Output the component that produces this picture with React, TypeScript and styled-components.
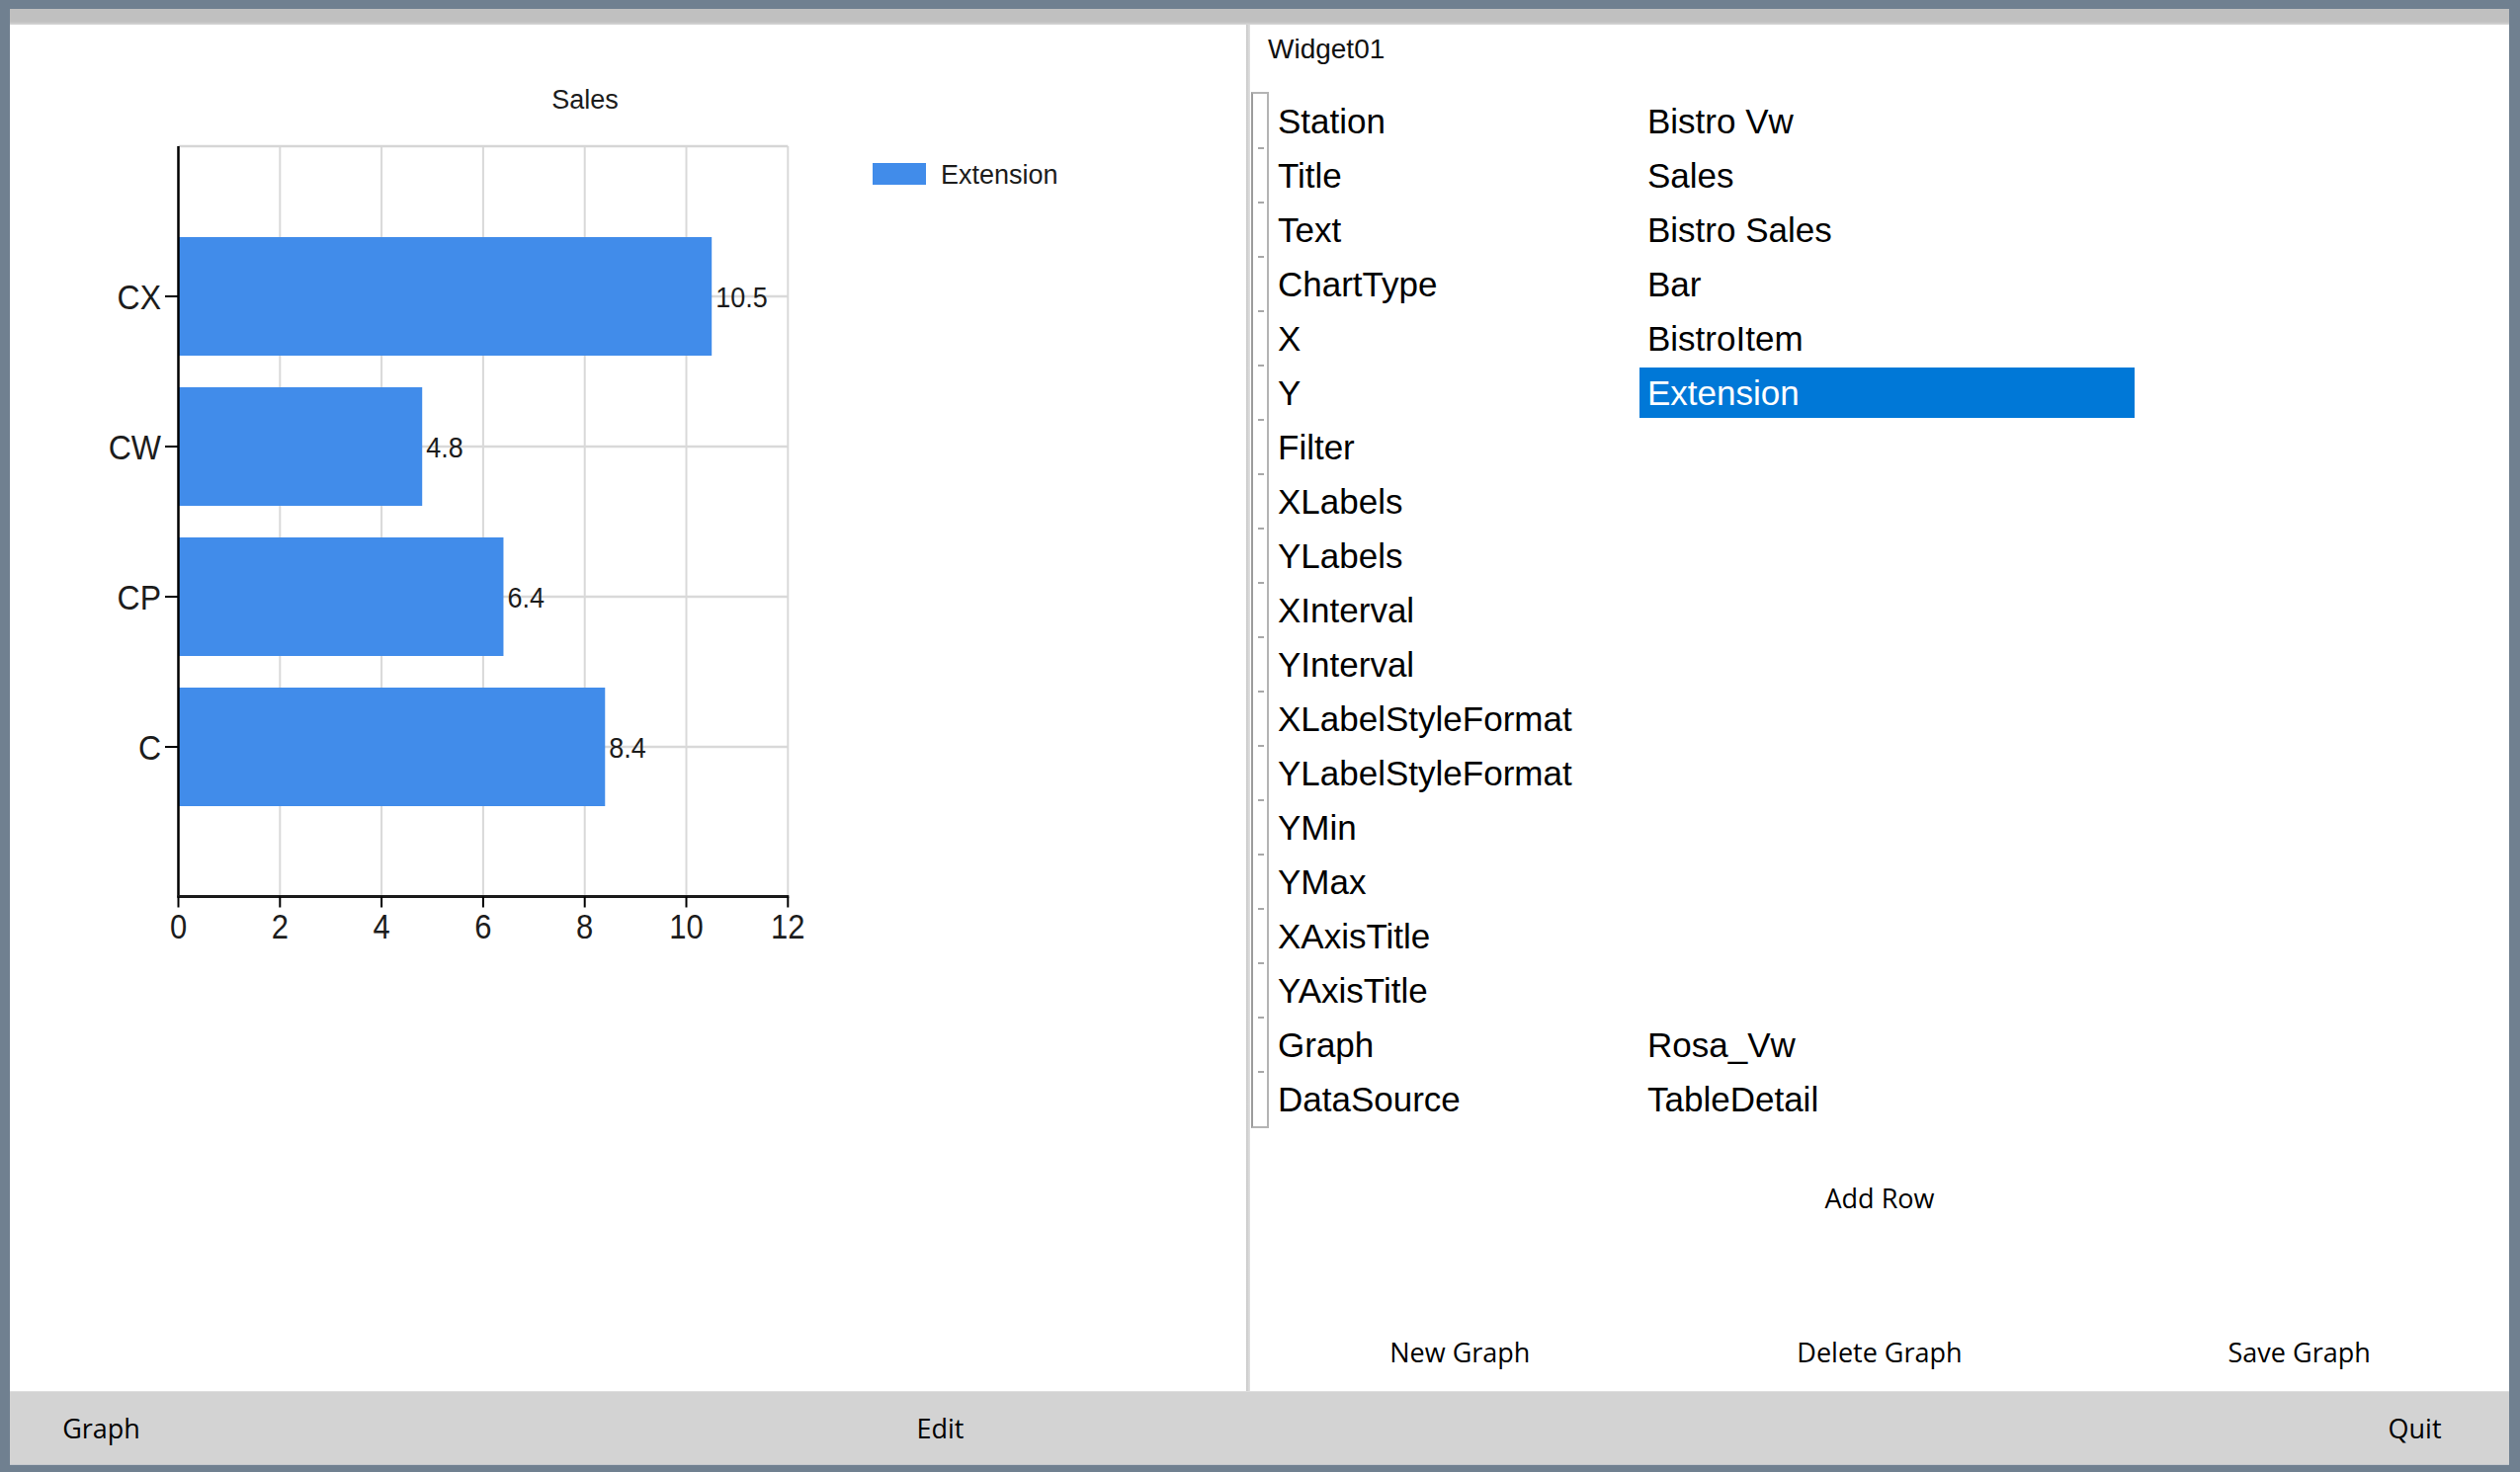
import React from "react";
import styled, { createGlobalStyle } from "styled-components";

const GlobalStyle = createGlobalStyle`
  html, body { margin: 0; padding: 0; }
  body { background: #708090; font-family: "Liberation Sans", Arial, sans-serif; }
  * { box-sizing: border-box; }
`;

const Window = styled.div`
  width: 2550px;
  height: 1490px;
  background: #708090;
  padding: 9px 11px 7px 10px;
  display: flex;
  flex-direction: column;
`;

const TopStrip = styled.div`
  height: 16px;
  flex: none;
  background: linear-gradient(#c0c0c0 0, #c0c0c0 13px, #d8d8d8 16px);
`;

const Main = styled.div`
  flex: 1;
  display: flex;
  min-height: 0;
`;

const ChartPanel = styled.div`
  width: 1251px;
  flex: none;
  background: #ffffff;
`;

const Divider = styled.div`
  width: 4px;
  flex: none;
  background: linear-gradient(90deg, #c8c8c8, #e2e2e2);
`;

const EditorPanel = styled.div`
  flex: 1;
  background: #ffffff;
  display: flex;
  flex-direction: column;
`;

const WidgetName = styled.div`
  height: 68px;
  padding: 8px 0 0 18px;
  font-family: "Liberation Sans", Arial, sans-serif;
  font-size: 28px;
  line-height: 34px;
  color: #111;
`;

const GridFrame = styled.div`
  display: flex;
  margin-left: 1px;
`;

const HeaderColumn = styled.div`
  width: 18px;
  border: 2px solid #b4b4b4;
  border-left-color: #9c9c9c;
  display: flex;
  flex-direction: column;
`;

const HeaderCell = styled.div<{ $last: boolean }>`
  height: 55px;
  position: relative;
  &::after {
    content: "";
    display: ${(p) => (p.$last ? "none" : "block")};
    position: absolute;
    left: 5px;
    bottom: -1px;
    width: 6px;
    height: 2px;
    background: #a8a8a8;
  }
`;

const Rows = styled.div`
  display: flex;
  flex-direction: column;
  padding-top: 2px;
`;

const Row = styled.div`
  display: grid;
  grid-template-columns: 375px 501px;
  height: 55px;
`;

const Cell = styled.div<{ $selected?: boolean; $value?: boolean }>`
  font-family: "Liberation Sans", Arial, sans-serif;
  font-size: 35px;
  line-height: 55px;
  white-space: nowrap;
  padding-left: ${(p) => (p.$value ? "8px" : "9px")};
  color: ${(p) => (p.$selected ? "#ffffff" : "#000000")};
  background: ${(p) => (p.$selected ? "#0078d7" : "transparent")};
  box-shadow: ${(p) =>
    p.$selected ? "inset 0 2px 0 #ffffff, inset 0 -2px 0 #ffffff" : "none"};
`;

const FlatButton = styled.div`
  font-family: "Open Sans", "Noto Sans", sans-serif;
  font-size: 27px;
  line-height: 46px;
  height: 46px;
  text-align: center;
  color: #000;
  white-space: nowrap;
`;

const AddRowArea = styled.div`
  margin-top: 48px;
`;

const ActionRow = styled.div`
  margin-top: 110px;
  display: grid;
  grid-template-columns: 1fr 1fr 1fr;
`;

const BottomBar = styled.div`
  height: 75px;
  flex: none;
  background: #d3d3d3;
  border-top: 1px solid #dedede;
  border-bottom: 1px solid #c4c8cc;
  display: grid;
  grid-template-columns: 185px 664px 185px 1fr 185px;
  padding-right: 3px;
`;

const BarItem = styled.div`
  font-family: "Open Sans", "Noto Sans", sans-serif;
  font-size: 27px;
  line-height: 73px;
  text-align: center;
  color: #000;
`;

const X0 = 180.5;
const PX = 51.4;
const TOP = 148;
const BOTTOM = 907.5;
const RIGHT = X0 + 12 * PX;

const data = [
  { label: "CX", v: 10.5, y: 300 },
  { label: "CW", v: 4.8, y: 452 },
  { label: "CP", v: 6.4, y: 604 },
  { label: "C", v: 8.4, y: 756 },
];

const TXT = "#1c1c1c";

function SText(props: {
  x: number;
  y: number;
  size: number;
  anchor: "start" | "middle" | "end";
  sy?: number;
  children: React.ReactNode;
}) {
  const sy = props.sy ?? 1;
  return (
    <text
      transform={`translate(${props.x} ${props.y}) scale(1 ${sy})`}
      x={0}
      y={0}
      fontSize={props.size}
      textAnchor={props.anchor}
      dominantBaseline="central"
      fill={TXT}
      fontFamily='"Liberation Sans", Arial, sans-serif'
    >
      {props.children}
    </text>
  );
}

function SalesChart() {
  const ticks = [0, 2, 4, 6, 8, 10, 12];
  return (
    <svg width={1251} height={1383} viewBox="10 25 1251 1383">
      <SText x={592} y={101} size={27} anchor="middle">
        Sales
      </SText>
      {ticks.slice(1).map((t) => (
        <line
          key={`g${t}`}
          x1={X0 + t * PX}
          x2={X0 + t * PX}
          y1={TOP}
          y2={BOTTOM}
          stroke="#d9d9d9"
          strokeWidth={2}
        />
      ))}
      <line x1={X0} x2={RIGHT} y1={TOP} y2={TOP} stroke="#d6d6d6" strokeWidth={2.5} />
      {data.map((d) => (
        <line
          key={`h${d.label}`}
          x1={X0}
          x2={RIGHT}
          y1={d.y}
          y2={d.y}
          stroke="#d9d9d9"
          strokeWidth={2.5}
        />
      ))}
      {data.map((d) => (
        <rect
          key={`b${d.label}`}
          x={X0}
          y={d.y - 60}
          width={d.v * PX}
          height={120}
          fill="#418cea"
        />
      ))}
      <line x1={X0} x2={X0} y1={TOP} y2={BOTTOM + 1} stroke="#000" strokeWidth={2.5} />
      <line x1={X0 - 1} x2={RIGHT + 1} y1={BOTTOM} y2={BOTTOM} stroke="#1a1a1a" strokeWidth={3} />
      {ticks.map((t) => (
        <line
          key={`t${t}`}
          x1={X0 + t * PX}
          x2={X0 + t * PX}
          y1={BOTTOM}
          y2={BOTTOM + 11}
          stroke="#000"
          strokeWidth={2}
        />
      ))}
      {data.map((d) => (
        <line key={`yt${d.label}`} x1={167} x2={X0} y1={d.y} y2={d.y} stroke="#000" strokeWidth={2} />
      ))}
      {data.map((d) => (
        <SText key={`l${d.label}`} x={163} y={d.y} size={32} anchor="end" sy={1.12}>
          {d.label}
        </SText>
      ))}
      {data.map((d) => (
        <SText key={`v${d.label}`} x={X0 + d.v * PX + 4} y={d.y} size={27} anchor="start" sy={1.12}>
          {d.v.toFixed(1)}
        </SText>
      ))}
      {ticks.map((t) => (
        <SText key={`n${t}`} x={X0 + t * PX} y={938} size={31} anchor="middle" sy={1.12}>
          {t}
        </SText>
      ))}
      <rect x={883} y={165} width={54} height={22} fill="#418cea" />
      <SText x={952} y={177} size={27} anchor="start">
        Extension
      </SText>
    </svg>
  );
}

const properties: { name: string; value: string }[] = [
  { name: "Station", value: "Bistro Vw" },
  { name: "Title", value: "Sales" },
  { name: "Text", value: "Bistro Sales" },
  { name: "ChartType", value: "Bar" },
  { name: "X", value: "BistroItem" },
  { name: "Y", value: "Extension" },
  { name: "Filter", value: "" },
  { name: "XLabels", value: "" },
  { name: "YLabels", value: "" },
  { name: "XInterval", value: "" },
  { name: "YInterval", value: "" },
  { name: "XLabelStyleFormat", value: "" },
  { name: "YLabelStyleFormat", value: "" },
  { name: "YMin", value: "" },
  { name: "YMax", value: "" },
  { name: "XAxisTitle", value: "" },
  { name: "YAxisTitle", value: "" },
  { name: "Graph", value: "Rosa_Vw" },
  { name: "DataSource", value: "TableDetail" },
];

export default function App() {
  return (
    <>
      <GlobalStyle />
      <Window>
        <TopStrip />
        <Main>
          <ChartPanel>
            <SalesChart />
          </ChartPanel>
          <Divider />
          <EditorPanel>
            <WidgetName>Widget01</WidgetName>
            <GridFrame>
              <HeaderColumn>
                {properties.map((p, i) => (
                  <HeaderCell key={p.name} $last={i === properties.length - 1} />
                ))}
              </HeaderColumn>
              <Rows>
                {properties.map((p) => (
                  <Row key={p.name}>
                    <Cell>{p.name}</Cell>
                    <Cell $value $selected={p.name === "Y"}>
                      {p.value}
                    </Cell>
                  </Row>
                ))}
              </Rows>
            </GridFrame>
            <AddRowArea>
              <FlatButton>Add Row</FlatButton>
            </AddRowArea>
            <ActionRow>
              <FlatButton>New Graph</FlatButton>
              <FlatButton>Delete Graph</FlatButton>
              <FlatButton>Save Graph</FlatButton>
            </ActionRow>
          </EditorPanel>
        </Main>
        <BottomBar>
          <BarItem>Graph</BarItem>
          <div />
          <BarItem>Edit</BarItem>
          <div />
          <BarItem>Quit</BarItem>
        </BottomBar>
      </Window>
    </>
  );
}
